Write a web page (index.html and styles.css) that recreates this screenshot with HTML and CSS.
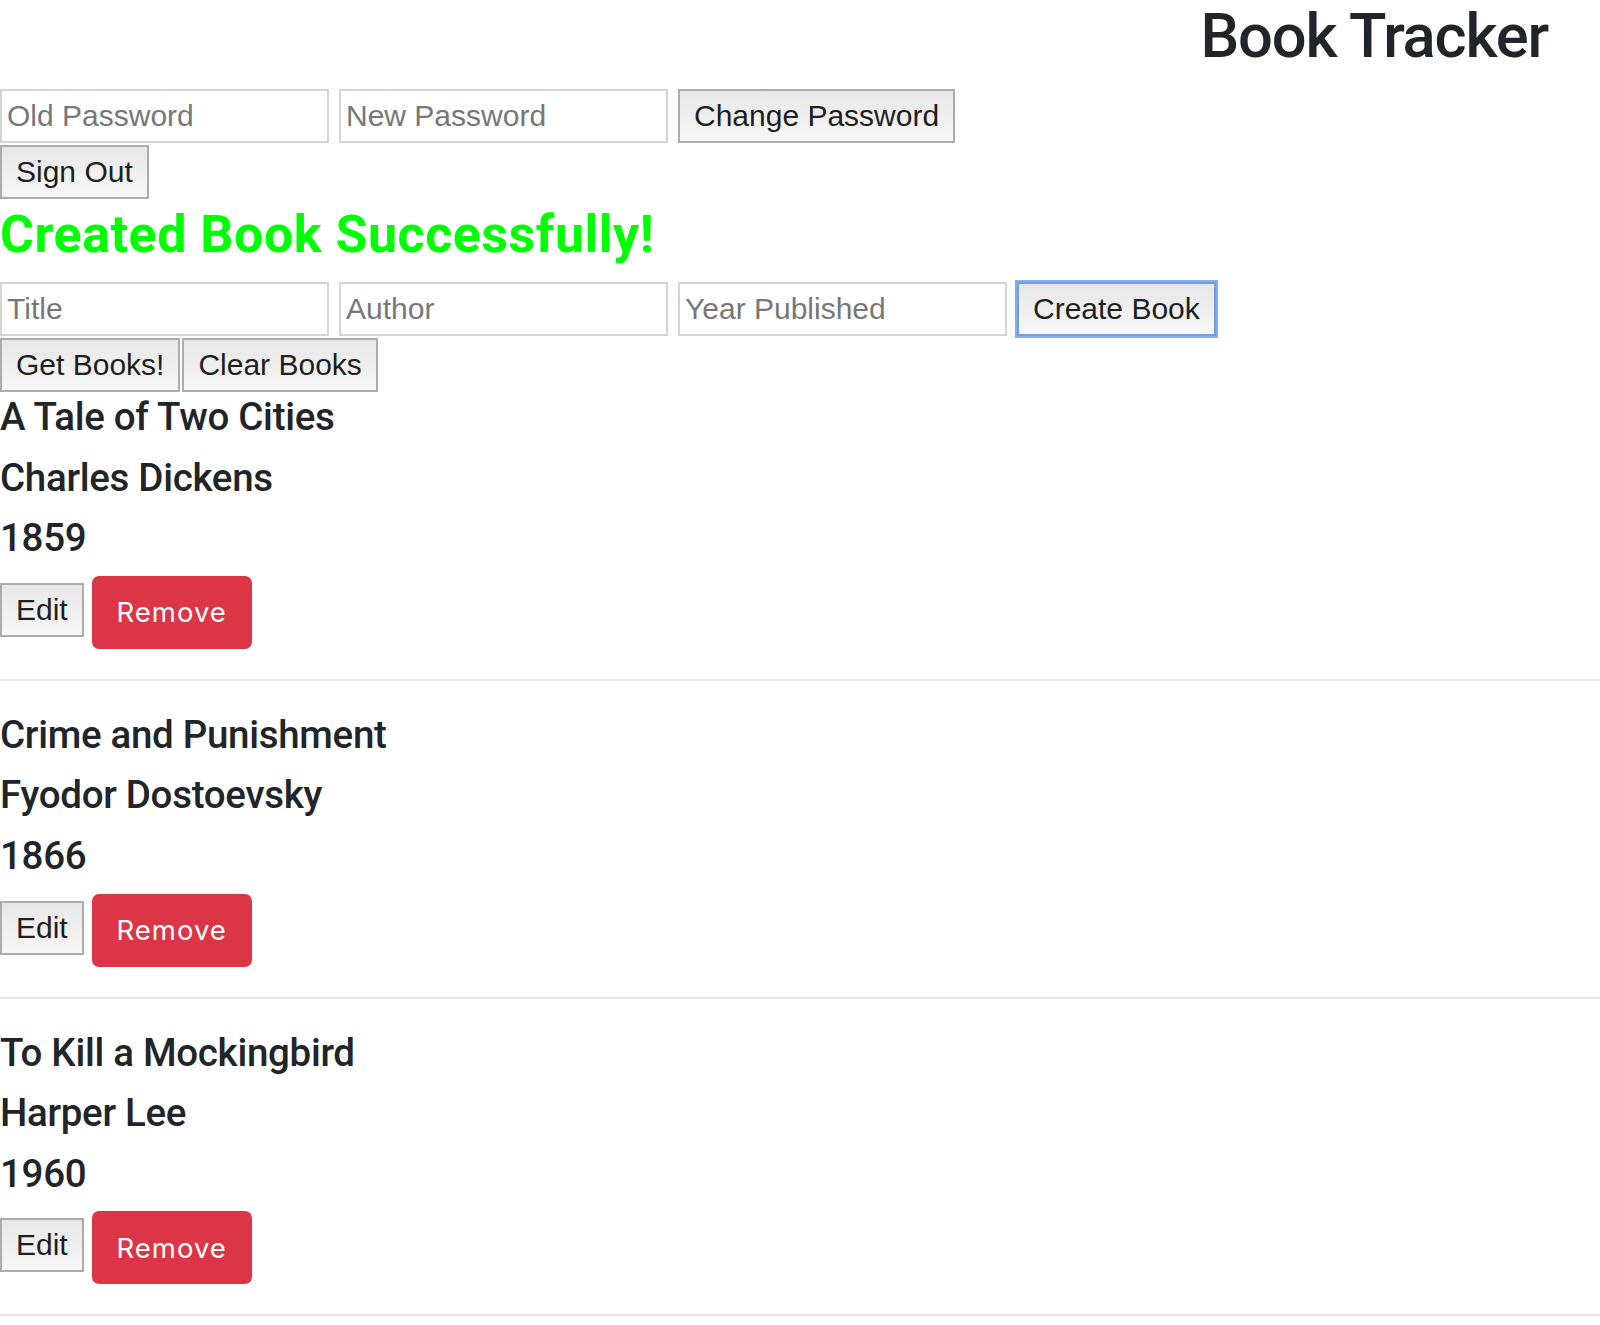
FILE: index.html
```html
<!DOCTYPE html>
<html>
<head>
<meta charset="utf-8">
<title>Book Tracker</title>
<link rel="stylesheet" href="styles.css">
</head>
<body>
<header class="top">
  <h1 class="app-title">Book Tracker</h1>
</header>
<form class="row">
  <input class="field" type="password" placeholder="Old Password">
  <input class="field" type="password" placeholder="New Password">
  <button class="btn" type="button">Change Password</button>
</form>
<div class="row">
  <button class="btn" type="button">Sign Out</button>
</div>
<h2 class="message">Created Book Successfully!</h2>
<form class="row">
  <input class="field" type="text" placeholder="Title">
  <input class="field" type="text" placeholder="Author">
  <input class="field" type="text" placeholder="Year Published">
  <button class="btn btn-focus" type="button">Create Book</button>
</form>
<div class="row row-tight">
  <button class="btn" type="button">Get Books!</button>
  <button class="btn" type="button">Clear Books</button>
</div>
<section class="books">
  <article class="book">
    <h4 class="book-line">A Tale of Two Cities</h4>
    <h4 class="book-line">Charles Dickens</h4>
    <h4 class="book-line">1859</h4>
    <div class="actions">
      <button class="btn btn-edit" type="button">Edit</button>
      <button class="btn-remove" type="button">Remove</button>
    </div>
    <hr class="sep">
  </article>
  <article class="book">
    <h4 class="book-line">Crime and Punishment</h4>
    <h4 class="book-line">Fyodor Dostoevsky</h4>
    <h4 class="book-line">1866</h4>
    <div class="actions">
      <button class="btn btn-edit" type="button">Edit</button>
      <button class="btn-remove" type="button">Remove</button>
    </div>
    <hr class="sep">
  </article>
  <article class="book">
    <h4 class="book-line">To Kill a Mockingbird</h4>
    <h4 class="book-line">Harper Lee</h4>
    <h4 class="book-line">1960</h4>
    <div class="actions">
      <button class="btn btn-edit" type="button">Edit</button>
      <button class="btn-remove" type="button">Remove</button>
    </div>
    <hr class="sep">
  </article>
</section>
</body>
</html>
```
FILE: styles.css
```css
html, body {
  margin: 0;
  padding: 0;
  background: #ffffff;
}
body {
  font-family: Roboto, "Liberation Sans", Arial, sans-serif;
  color: #212529;
}
.top {
  padding-right: 52px;
  margin-bottom: 17px;
}
.app-title {
  margin: 0;
  text-align: right;
  font-size: 61.5px;
  line-height: 72px;
  font-weight: 500;
  letter-spacing: -1.2px;
}
.row {
  display: flex;
  gap: 10px;
  margin: 0 0 2px 0;
  height: 54px;
}
.row-tight {
  gap: 2px;
}
.field {
  box-sizing: border-box;
  width: 329px;
  height: 54px;
  margin: 0;
  padding: 0 5px;
  border: 2px solid #d4d4d4;
  background: #fff;
  font-family: "Liberation Sans", Arial, sans-serif;
  font-size: 30px;
  color: #222;
}
.field::placeholder {
  color: #777;
}
.btn {
  box-sizing: border-box;
  height: 54px;
  margin: 0;
  padding: 0 14px;
  border: 2px solid #acacac;
  border-radius: 0;
  background: linear-gradient(#e7e7e7, #f7f7f7);
  font-family: "Liberation Sans", Arial, sans-serif;
  font-size: 30px;
  color: #1e1e1e;
}
.btn-focus {
  border-color: #6f9ee6;
  box-shadow: 0 0 0 2px #86aeea;
}
.message {
  margin: 0 0 13px 0;
  color: #00ff00;
  font-size: 52px;
  line-height: 68px;
  font-weight: 700;
  letter-spacing: 0.5px;
}
.books {
  margin-top: 0;
}
.book-line {
  margin: 0 0 15px 0;
  font-size: 38.5px;
  line-height: 45.6px;
  font-weight: 500;
  letter-spacing: -0.3px;
}
.actions {
  display: flex;
  gap: 8px;
  align-items: flex-start;
}
.btn-edit {
  margin-top: 7px;
}
.btn-remove {
  box-sizing: border-box;
  width: 160px;
  height: 73px;
  border: none;
  border-radius: 7px;
  background: #dc3545;
  color: #fff;
  font-family: Inter, "Liberation Sans", Arial, sans-serif;
  font-size: 27.5px;
  letter-spacing: 1px;
  padding: 0;
}
.sep {
  margin: 30px 0 31px 0;
  border: 0;
  border-top: 2px solid #e5e5e5;
  height: 0;
}
```
